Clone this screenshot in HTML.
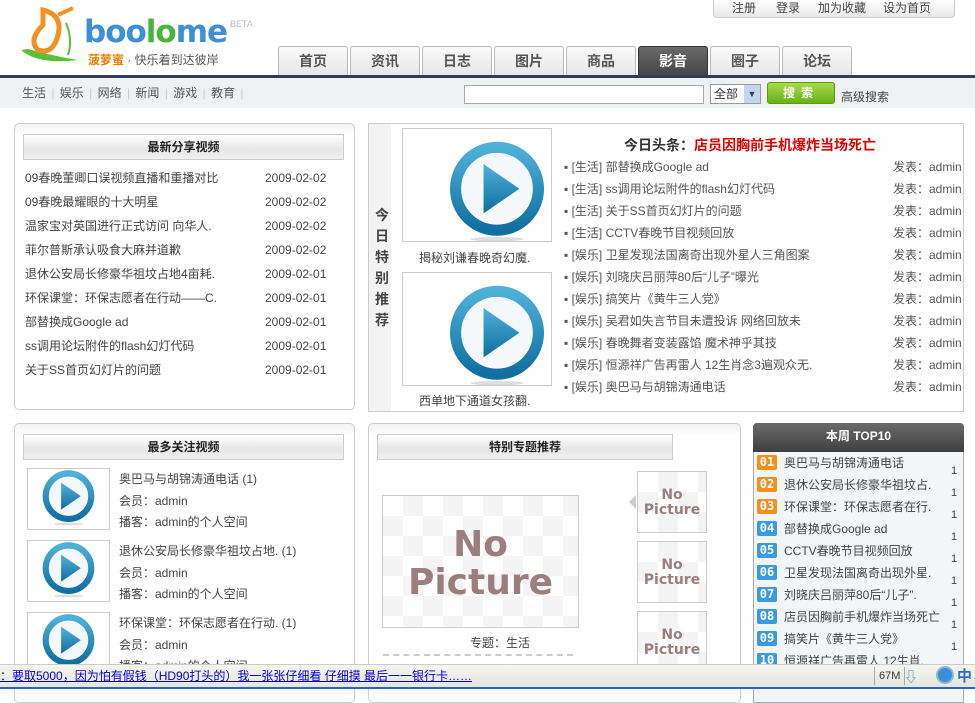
<!DOCTYPE html>
<html><head><meta charset="utf-8"><style>
*{margin:0;padding:0;box-sizing:border-box}
body{width:975px;height:689px;overflow:hidden;background:#fff;font-family:"Liberation Sans","Noto Sans CJK SC",sans-serif;font-size:12px;color:#333;position:relative}
.a{position:absolute}
.tab{position:absolute;top:46px;width:70px;height:30px;border:1px solid #b8b8b8;border-bottom:none;border-radius:3px 3px 0 0;background:linear-gradient(#fafafa,#e6e6e6);text-align:center;line-height:28px;font-size:14px;font-weight:bold;color:#555}
.tab.on{background:linear-gradient(#6a6a6a,#444);color:#fff;border-color:#333}
.box{position:absolute;border:1px solid #ccc;border-radius:5px;background:linear-gradient(#f2f2f2,#fff 12px,#fff)}
.hd{position:absolute;height:26px;border:1px solid #ccc;background:linear-gradient(#fff,#e6e6e6 60%,#f0f0f0);text-align:center;line-height:24px;font-weight:bold;font-size:12px;color:#222}
.row{position:absolute;font-size:12px;color:#444;white-space:nowrap}
.np{position:absolute;border:1px solid #ccc;background:
conic-gradient(#f4f4f4 25%,#fff 0 50%,#f4f4f4 0 75%,#fff 0) 0 0/40px 40px;color:#9b7f7f;font-weight:bold;text-align:center;font-family:"DejaVu Sans",sans-serif}
.bd{position:absolute;left:757px;width:20px;height:15px;color:#fff;font-weight:bold;font-size:12px;line-height:15px;text-align:center;border-radius:2px;font-family:"DejaVu Sans Mono",monospace}
</style></head><body>
<svg width="0" height="0" style="position:absolute"><defs>
<linearGradient id="g" x1="0" y1="0" x2="0" y2="1"><stop offset="0" stop-color="#4fb0d8"/><stop offset="1" stop-color="#0e6fa0"/></linearGradient>
<symbol id="pl" viewBox="0 0 100 100"><circle cx="50" cy="48" r="37" fill="#f4f8fa" stroke="url(#g)" stroke-width="10"/><path d="M38 26 L70 48 L38 70 Z" fill="url(#g)"/><ellipse cx="50" cy="93" rx="24" ry="2" fill="#ddd"/></symbol>
</defs></svg>

<div class="a" style="left:713px;top:0;width:242px;height:18px;border:1px solid #ccc;border-top:none;border-radius:0 0 4px 4px;background:linear-gradient(#fff,#e8e8e8);font-size:12px;color:#444;line-height:17px">
<span class="a" style="left:18px">注册</span><span class="a" style="left:62px">登录</span><span class="a" style="left:104px">加为收藏</span><span class="a" style="left:169px">设为首页</span></div>

<svg class="a" style="left:18px;top:5px" width="70" height="65" viewBox="0 0 70 65"><path d="M3 45 Q20 60 60 55 Q40 52 10 44Z" fill="#5cbf3a"/><path d="M25 5 Q45 10 40 30 Q35 50 20 45 Q10 35 25 20 Z" fill="none" stroke="#f39020" stroke-width="5"/><path d="M40 10 L55 3" stroke="#f39020" stroke-width="4"/><path d="M48 18 Q55 35 50 50" stroke="#5cbf3a" stroke-width="2" fill="none"/></svg>
<div class="a" style="left:84px;top:14px;font-size:31px;font-weight:bold;color:#3d8fd6;letter-spacing:-1px;font-family:'DejaVu Sans',sans-serif;line-height:36px">boo<span style="color:#47b53a">lo</span>me</div>
<div class="a" style="left:230px;top:19px;font-size:9px;color:#bbb">BETA</div>
<div class="a" style="left:88px;top:51px;font-size:12px;color:#555"><b style="color:#f07d00">菠萝蜜</b> · 快乐着到达彼岸</div>

<div class="tab" style="left:278px">首页</div><div class="tab" style="left:350px">资讯</div><div class="tab" style="left:422px">日志</div><div class="tab" style="left:494px">图片</div><div class="tab" style="left:566px">商品</div><div class="tab on" style="left:638px">影音</div><div class="tab" style="left:710px">圈子</div><div class="tab" style="left:782px">论坛</div>
<div class="a" style="left:0;top:75px;width:975px;height:3px;background:#2f3d58"></div>
<div class="a" style="left:0;top:78px;width:975px;height:30px;background:#eff1f3"></div>
<div class="a" style="left:22px;top:84px;font-size:12px;color:#555;word-spacing:2px">生活 <span style="color:#ccc">|</span> 娱乐 <span style="color:#ccc">|</span> 网络 <span style="color:#ccc">|</span> 新闻 <span style="color:#ccc">|</span> 游戏 <span style="color:#ccc">|</span> 教育 <span style="color:#ccc">|</span></div>
<div class="a" style="left:464px;top:85px;width:240px;height:19px;border:1px solid #aaa;background:#fff"></div>
<div class="a" style="left:710px;top:84px;width:51px;height:20px;border:1px solid #999;background:#fff;font-size:12px;line-height:18px;padding-left:3px">全部<span class="a" style="right:0;top:0;width:16px;height:18px;background:#c4d6ef;color:#345;font-size:9px;text-align:center">▼</span></div>
<div class="a" style="left:767px;top:82px;width:68px;height:22px;border:1px solid #5a9a10;border-radius:3px;background:linear-gradient(#a4dc4a,#6bb016);color:#fff;font-weight:bold;text-align:center;line-height:20px;letter-spacing:6px">搜索</div>
<div class="a" style="left:841px;top:88px;color:#444">高级搜索</div>

<div class="box" style="left:14px;top:123px;width:341px;height:287px"></div>
<div class="hd" style="left:23px;top:134px;width:321px">最新分享视频</div>
<div class="row" style="left:25px;top:166px;line-height:24px">09春晚董卿口误视频直播和重播对比<br>09春晚最耀眼的十大明星<br>温家宝对英国进行正式访问 向华人.<br>菲尔普斯承认吸食大麻并道歉<br>退休公安局长修豪华祖坟占地4亩耗.<br>环保课堂：环保志愿者在行动——C.<br>部替换成Google ad<br>ss调用论坛附件的flash幻灯代码<br>关于SS首页幻灯片的问题</div>
<div class="row" style="left:265px;top:166px;line-height:24px">2009-02-02<br>2009-02-02<br>2009-02-02<br>2009-02-02<br>2009-02-01<br>2009-02-01<br>2009-02-01<br>2009-02-01<br>2009-02-01</div>

<div class="a" style="left:368px;top:123px;width:596px;height:289px;border:1px solid #ccc"></div>
<div class="a" style="left:369px;top:124px;width:22px;height:287px;background:#f3f3f3"></div>
<div class="a" style="left:375px;top:205px;width:14px;font-size:14px;font-weight:bold;line-height:21px;color:#444">今日特别推荐</div>
<div class="a" style="left:402px;top:128px;width:150px;height:114px;border:1px solid #ccc"><svg width="148" height="112" viewBox="-20 -6 140 112"><use href="#pl"/></svg></div>
<div class="row" style="left:419px;top:249px">揭秘刘谦春晚奇幻魔.</div>
<div class="a" style="left:402px;top:272px;width:150px;height:114px;border:1px solid #ccc"><svg width="148" height="112" viewBox="-20 -6 140 112"><use href="#pl"/></svg></div>
<div class="row" style="left:419px;top:392px">西单地下通道女孩翻.</div>
<div class="a" style="left:624px;top:135px;font-size:14px;font-weight:bold;color:#333">今日头条：<span style="color:#d00">店员因胸前手机爆炸当场死亡</span></div>
<div class="row" style="left:564px;top:156px;line-height:22px;color:#555">▪ [生活] 部替换成Google ad<br>▪ [生活] ss调用论坛附件的flash幻灯代码<br>▪ [生活] 关于SS首页幻灯片的问题<br>▪ [生活] CCTV春晚节目视频回放<br>▪ [娱乐] 卫星发现法国离奇出现外星人三角图案<br>▪ [娱乐] 刘晓庆吕丽萍80后“儿子”曝光<br>▪ [娱乐] 搞笑片《黄牛三人党》<br>▪ [娱乐] 吴君如失言节目未遭投诉 网络回放未<br>▪ [娱乐] 春晚舞者变装露馅 魔术神乎其技<br>▪ [娱乐] 恒源祥广告再雷人 12生肖念3遍观众无.<br>▪ [娱乐] 奥巴马与胡锦涛通电话</div>
<div class="row" style="left:893px;top:156px;line-height:22px;color:#555">发表：admin<br>发表：admin<br>发表：admin<br>发表：admin<br>发表：admin<br>发表：admin<br>发表：admin<br>发表：admin<br>发表：admin<br>发表：admin<br>发表：admin</div>

<div class="box" style="left:14px;top:423px;width:341px;height:280px"></div>
<div class="hd" style="left:23px;top:434px;width:321px">最多关注视频</div>
<div class="a" style="left:27px;top:468px;width:83px;height:62px;border:1px solid #ccc;background:#fff"><svg width="81" height="60" viewBox="0 -2 100 74"><use href="#pl" x="12" y="-10" width="76" height="86"/></svg></div>
<div class="a" style="left:27px;top:540px;width:83px;height:62px;border:1px solid #ccc;background:#fff"><svg width="81" height="60" viewBox="0 -2 100 74"><use href="#pl" x="12" y="-10" width="76" height="86"/></svg></div>
<div class="a" style="left:27px;top:612px;width:83px;height:62px;border:1px solid #ccc;background:#fff"><svg width="81" height="60" viewBox="0 -2 100 74"><use href="#pl" x="12" y="-10" width="76" height="86"/></svg></div>
<div class="row" style="left:119px;top:469px;line-height:21.5px">奥巴马与胡锦涛通电话 (1)<br>会员：admin<br>播客：admin的个人空间</div>
<div class="row" style="left:119px;top:541px;line-height:21.5px">退休公安局长修豪华祖坟占地. (1)<br>会员：admin<br>播客：admin的个人空间</div>
<div class="row" style="left:119px;top:613px;line-height:21.5px">环保课堂：环保志愿者在行动. (1)<br>会员：admin<br>播客：admin的个人空间</div>

<div class="box" style="left:368px;top:423px;width:373px;height:280px"></div>
<div class="hd" style="left:377px;top:434px;width:296px">特别专题推荐</div>
<div class="np" style="left:382px;top:495px;width:197px;height:133px;font-size:36px;line-height:38px;padding-top:30px">No<br>Picture</div>
<div class="row" style="left:470px;top:634px">专题：生活</div>
<div class="a" style="left:383px;top:654px;width:190px;border-top:2px dashed #ccc"></div>
<div class="a" style="left:629px;top:495px;width:0;height:0;border:7px solid transparent;border-right-color:#ccc;border-left:none"></div>
<div class="np" style="left:637px;top:471px;width:70px;height:62px;font-size:14px;line-height:15px;padding-top:16px">No<br>Picture</div>
<div class="np" style="left:637px;top:541px;width:70px;height:62px;font-size:14px;line-height:15px;padding-top:16px">No<br>Picture</div>
<div class="np" style="left:637px;top:611px;width:70px;height:62px;font-size:14px;line-height:15px;padding-top:16px">No<br>Picture</div>

<div class="a" style="left:753px;top:423px;width:211px;height:280px;border:1px solid #aaa;border-radius:4px 4px 0 0;background:#f3f5f7"></div>
<div class="a" style="left:753px;top:423px;width:211px;height:29px;border-radius:4px 4px 0 0;background:linear-gradient(#6b6b6b,#3f3f3f);color:#fff;font-weight:bold;text-align:center;line-height:27px">本周 TOP10</div>
<div class="bd" style="top:455px;background:#f39020">01</div>
<div class="bd" style="top:477px;background:#f39020">02</div>
<div class="bd" style="top:499px;background:#f39020">03</div>
<div class="bd" style="top:521px;background:#3b9be0">04</div>
<div class="bd" style="top:543px;background:#3b9be0">05</div>
<div class="bd" style="top:565px;background:#3b9be0">06</div>
<div class="bd" style="top:587px;background:#3b9be0">07</div>
<div class="bd" style="top:609px;background:#3b9be0">08</div>
<div class="bd" style="top:631px;background:#3b9be0">09</div>
<div class="bd" style="top:653px;background:#3b9be0">10</div>
<div class="row" style="left:784px;top:452px;line-height:22px">奥巴马与胡锦涛通电话<br>退休公安局长修豪华祖坟占.<br>环保课堂：环保志愿者在行.<br>部替换成Google ad<br>CCTV春晚节目视频回放<br>卫星发现法国离奇出现外星.<br>刘晓庆吕丽萍80后“儿子”.<br>店员因胸前手机爆炸当场死亡<br>搞笑片《黄牛三人党》<br>恒源祥广告再雷人 12生肖.</div>
<div class="row" style="left:951px;top:460px;line-height:22px;font-size:11px">1<br>1<br>1<br>1<br>1<br>1<br>1<br>1<br>1<br>1</div>

<div class="a" style="left:0;top:664px;width:975px;height:25px;background:linear-gradient(#f6f6f2,#e4e4dc);border-top:1px solid #ccc"></div>
<div class="a" style="left:0;top:667px;color:#00c;text-decoration:underline;font-size:12px;white-space:nowrap">：要取5000，因为怕有假钱（HD90打头的）我一张张仔细看 仔细摸 最后一一银行卡……</div>
<div class="a" style="left:874px;top:667px;height:18px;border-left:1px solid #aaa;border-right:1px solid #aaa;padding:0 4px;font-size:11px;line-height:18px">67M</div>
<div class="a" style="left:904px;top:667px;color:#4a90d0;font-size:14px">⇩</div>
<div class="a" style="left:936px;top:666px;width:18px;height:18px;border-radius:50%;background:#3b8ed8;border:2px solid #8bc"></div>
<div class="a" style="left:957px;top:665px;color:#2a6fc0;font-size:15px;font-weight:bold">中</div>
<div class="a" style="left:0;top:687px;width:975px;height:2px;background:#2a62c9"></div>
</body></html>
